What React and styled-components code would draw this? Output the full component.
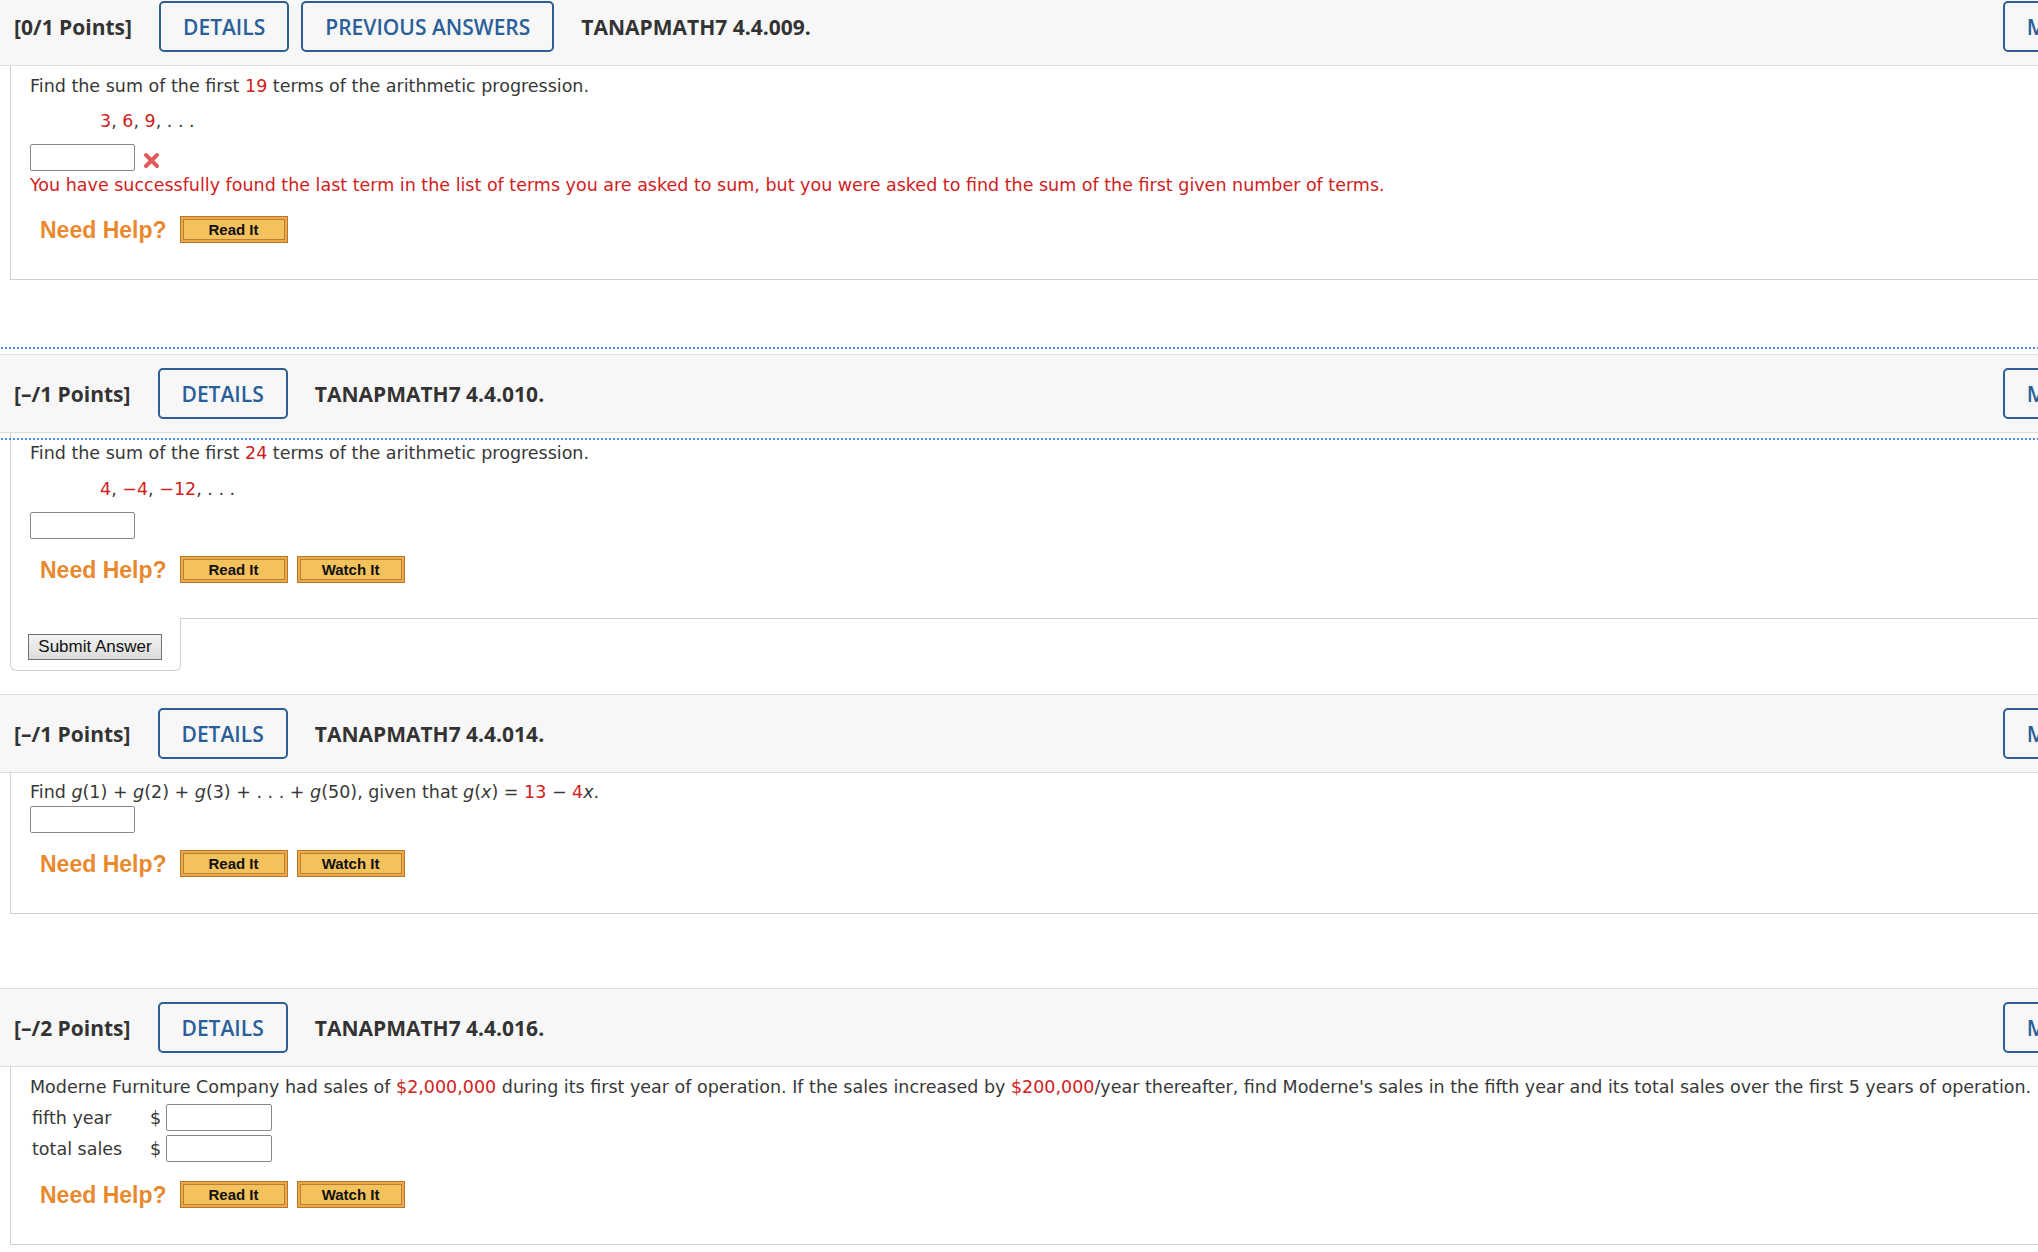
import React from 'react'
import styled, { createGlobalStyle, css } from 'styled-components'

const Global = createGlobalStyle`
html, body {
  margin: 0;
  padding: 0;
  background: #fff;
  overflow: hidden;
}
`

const Page = styled.div`
width: 2176px;
margin-top: -13px;
`

const Question = styled.section`
margin-bottom: ${p => p.$after}px;
`

const Header = styled.div`
display: flex;
align-items: center;
gap: 12px;
height: 79px;
box-sizing: border-box;
padding: 0 20px 0 14px;
background: #f7f7f7;
border-top: 1px solid #dedede;
border-bottom: 1px solid #dedede;
font-family: "Open Sans", sans-serif;
color: #333;
${p => p.$active && css`
  outline: 2px dotted #4a8de6;
  outline-offset: 5px;
`}
`

const Points = styled.span`
font-size: 21px;
font-weight: 700;
margin-right: 15px;
`

const Title = styled.span`
font-size: 21px;
font-weight: 700;
margin-left: 15px;
`

const HeadButton = styled.button`
height: 51px;
padding: 0 22px;
box-sizing: border-box;
border: 2px solid #2d5f96;
border-radius: 5px;
background: transparent;
color: #2a5f9a;
font-family: "Open Sans", sans-serif;
font-size: 21px;
font-weight: 600;
cursor: pointer;
${p => p.$right && css`margin-left: auto;`}
`

const Body = styled.div`
margin-left: 10px;
border-left: 1px solid #cfcfcf;
border-bottom: ${p => (p.$open ? 'none' : '1px solid #cfcfcf')};
padding: ${p => p.$top || 10}px 20px ${p => p.$bottom || 36}px 19px;
color: #383838;
font-family: "DejaVu Sans", Verdana, sans-serif;
font-size: 17.5px;
line-height: 20px;
white-space: nowrap;
`

const Line = styled.div`
margin-top: ${p => p.$mt || 0}px;
margin-left: ${p => p.$ml || 0}px;
color: ${p => (p.$error ? '#d0211c' : 'inherit')};
`

const Red = styled.span`
color: #d0211c;
`

const Var = styled.i`
font-style: italic;
`

const AnswerRow = styled.div`
display: flex;
align-items: center;
gap: 8px;
margin-top: ${p => p.$mt || 0}px;
`

const Input = styled.input`
width: ${p => p.$w || 105}px;
height: 27px;
box-sizing: border-box;
border: 1px solid #888;
border-radius: 2px;
background: #fff;
margin: 0;
`

const WrongMark = styled.svg`
width: 17px;
height: 17px;
margin-top: 6px;
`

const FieldRow = styled.div`
display: grid;
grid-template-columns: 118px 16px 106px;
align-items: center;
margin-top: ${p => p.$mt || 0}px;
padding-left: 2px;
`

const HelpRow = styled.div`
display: flex;
align-items: center;
gap: 9px;
margin-top: ${p => p.$mt || 0}px;
`

const NeedHelp = styled.span`
font-family: "Liberation Sans", Arial, sans-serif;
font-size: 23px;
font-weight: 700;
color: #e8892e;
padding-left: 10px;
margin-right: 4px;
`

const HelpButton = styled.button`
width: 108px;
height: 27px;
box-sizing: border-box;
border: 1px solid #b9772c;
background: #f4c25d;
box-shadow: inset 0 0 0 2px #eea847, inset 0 0 0 3px #b78035;
font-family: "Liberation Sans", Arial, sans-serif;
font-size: 15px;
font-weight: 700;
color: #111;
padding: 0;
cursor: pointer;
`

const Footer = styled.div`
display: flex;
margin-left: 10px;
`

const SubmitCell = styled.div`
width: 171px;
box-sizing: border-box;
padding: 16px 0 10px 17px;
border-left: 1px solid #cfcfcf;
border-right: 1px solid #cfcfcf;
border-bottom: 1px solid #cfcfcf;
border-radius: 0 0 6px 6px;
`

const FooterRest = styled.div`
flex: 1;
border-top: 1px solid #cfcfcf;
`

const SubmitButton = styled.button`
width: 134px;
height: 26px;
box-sizing: border-box;
border: 1px solid #707070;
background: linear-gradient(#f3f3f3, #dcdcdc);
font-family: "Liberation Sans", Arial, sans-serif;
font-size: 17px;
color: #111;
padding: 0;
`

const QHeader = ({ points, prev, title, active }) => (
  <Header $active={active}>
    <Points>{points}</Points>
    <HeadButton>DETAILS</HeadButton>
    {prev && <HeadButton>PREVIOUS ANSWERS</HeadButton>}
    <Title>{title}</Title>
    <HeadButton $right>MY NOTES</HeadButton>
  </Header>
)

const Help = ({ mt, watch = true }) => (
  <HelpRow $mt={mt}>
    <NeedHelp>Need Help?</NeedHelp>
    <HelpButton>Read It</HelpButton>
    {watch && <HelpButton>Watch It</HelpButton>}
  </HelpRow>
)

export default function App() {
  return (
    <Page>
      <Global />

      <Question $after={74}>
        <QHeader points="[0/1 Points]" prev title="TANAPMATH7 4.4.009." />
        <Body>
          <Line>Find the sum of the first <Red>19</Red> terms of the arithmetic progression.</Line>
          <Line $mt={15} $ml={70}><Red>3</Red>, <Red>6</Red>, <Red>9</Red>, . . .</Line>
          <AnswerRow $mt={13}>
            <Input />
            <WrongMark viewBox="0 0 17 17">
              <path d="M3 3 L14 14 M14 3 L3 14" stroke="#e35a5a" strokeWidth="4" strokeLinecap="round" />
            </WrongMark>
          </AnswerRow>
          <Line $mt={4} $error>
            You have successfully found the last term in the list of terms you are asked to sum, but you were asked to find the sum of the first given number of terms.
          </Line>
          <Help mt={21} watch={false} />
        </Body>
      </Question>

      <Question $after={23}>
        <QHeader points="[–/1 Points]" title="TANAPMATH7 4.4.010." active />
        <Body $open $bottom={35}>
          <Line>Find the sum of the first <Red>24</Red> terms of the arithmetic progression.</Line>
          <Line $mt={16} $ml={70}><Red>4</Red>, <Red>−4</Red>, <Red>−12</Red>, . . .</Line>
          <AnswerRow $mt={13}>
            <Input />
          </AnswerRow>
          <Help mt={17} />
        </Body>
        <Footer>
          <SubmitCell>
            <SubmitButton>Submit Answer</SubmitButton>
          </SubmitCell>
          <FooterRest />
        </Footer>
      </Question>

      <Question $after={74}>
        <QHeader points="[–/1 Points]" title="TANAPMATH7 4.4.014." />
        <Body $top={9}>
          <Line>
            Find <Var>g</Var>(1) + <Var>g</Var>(2) + <Var>g</Var>(3) + . . . + <Var>g</Var>(50), given that <Var>g</Var>(<Var>x</Var>) = <Red>13</Red> − <Red>4</Red><Var>x</Var>.
          </Line>
          <AnswerRow $mt={4}>
            <Input />
          </AnswerRow>
          <Help mt={17} />
        </Body>
      </Question>

      <Question $after={0}>
        <QHeader points="[–/2 Points]" title="TANAPMATH7 4.4.016." />
        <Body>
          <Line>
            Moderne Furniture Company had sales of <Red>$2,000,000</Red> during its first year of operation. If the sales increased by <Red>$200,000</Red>/year thereafter, find Moderne's sales in the fifth year and its total sales over the first 5 years of operation.
          </Line>
          <FieldRow $mt={7}>
            <span>fifth year</span>
            <span>$</span>
            <Input $w={106} />
          </FieldRow>
          <FieldRow $mt={4}>
            <span>total sales</span>
            <span>$</span>
            <Input $w={106} />
          </FieldRow>
          <Help mt={19} />
        </Body>
      </Question>
    </Page>
  )
}
